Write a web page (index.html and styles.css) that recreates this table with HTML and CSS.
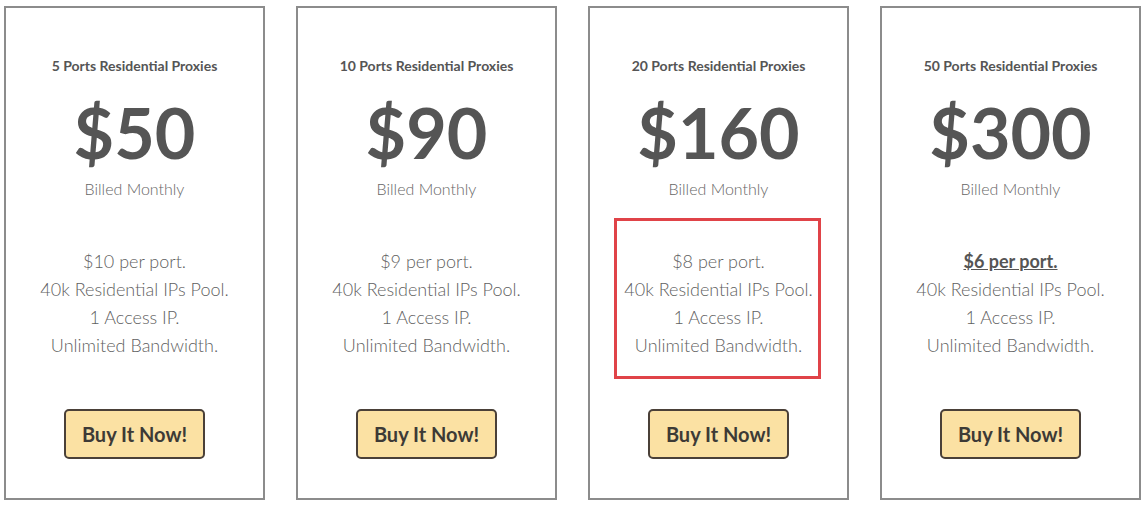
FILE: index.html
```html
<!DOCTYPE html>
<html>
<head>
<meta charset="utf-8">
<link rel="stylesheet" href="styles.css">
</head>
<body>
<div class="plans">
  <div class="card">
    <div class="title">5 Ports Residential Proxies</div>
    <div class="price">$50</div>
    <div class="billed">Billed Monthly</div>
    <div class="features">
      <div>$10 per port.</div>
      <div>40k Residential IPs Pool.</div>
      <div>1 Access IP.</div>
      <div>Unlimited Bandwidth.</div>
    </div>
    <button class="buy">Buy It Now!</button>
  </div>
  <div class="card">
    <div class="title">10 Ports Residential Proxies</div>
    <div class="price">$90</div>
    <div class="billed">Billed Monthly</div>
    <div class="features">
      <div>$9 per port.</div>
      <div>40k Residential IPs Pool.</div>
      <div>1 Access IP.</div>
      <div>Unlimited Bandwidth.</div>
    </div>
    <button class="buy">Buy It Now!</button>
  </div>
  <div class="card">
    <div class="title">20 Ports Residential Proxies</div>
    <div class="price">$160</div>
    <div class="billed">Billed Monthly</div>
    <div class="features">
      <div>$8 per port.</div>
      <div>40k Residential IPs Pool.</div>
      <div>1 Access IP.</div>
      <div>Unlimited Bandwidth.</div>
    </div>
    <button class="buy">Buy It Now!</button>
    <div class="highlight"></div>
  </div>
  <div class="card">
    <div class="title">50 Ports Residential Proxies</div>
    <div class="price">$300</div>
    <div class="billed">Billed Monthly</div>
    <div class="features">
      <div class="best">$6 per port.</div>
      <div>40k Residential IPs Pool.</div>
      <div>1 Access IP.</div>
      <div>Unlimited Bandwidth.</div>
    </div>
    <button class="buy">Buy It Now!</button>
  </div>
</div>
</body>
</html>
```

FILE: styles.css
```css
html, body {
  margin: 0;
  padding: 0;
  background: #ffffff;
}
body {
  font-family: Lato, "Open Sans", "Liberation Sans", sans-serif;
}
.plans {
  display: flex;
  gap: 31px;
  padding: 6px 0 0 4px;
}
.card {
  position: relative;
  box-sizing: border-box;
  width: 261px;
  height: 494px;
  border: 2px solid #8c8c8c;
  display: flex;
  flex-direction: column;
  align-items: center;
  padding-top: 50px;
}
.title {
  font-size: 14px;
  line-height: 16px;
  font-weight: 700;
  color: #555555;
}
.price {
  margin-top: 18px;
  font-size: 70px;
  line-height: 80px;
  font-weight: 700;
  color: #555555;
}
.billed {
  margin-top: 7px;
  font-size: 16px;
  line-height: 20px;
  font-weight: 300;
  color: #666666;
}
.features {
  margin-top: 48px;
  font-size: 18px;
  line-height: 28px;
  font-weight: 300;
  color: #5f5f5f;
  text-align: center;
}
.best {
  font-weight: 700;
  text-decoration: underline;
  color: #555555;
}
.buy {
  margin-top: 50px;
  width: 141px;
  height: 50px;
  box-sizing: border-box;
  background: #fbe1a3;
  border: 2px solid #4a4038;
  border-radius: 5px;
  font-family: Lato, "Open Sans", "Liberation Sans", sans-serif;
  font-size: 20px;
  font-weight: 700;
  color: #3d3a36;
  padding: 0;
}
.highlight {
  position: absolute;
  left: 24px;
  top: 210px;
  width: 207px;
  height: 161px;
  box-sizing: border-box;
  border: 3px solid #e04348;
}
```
